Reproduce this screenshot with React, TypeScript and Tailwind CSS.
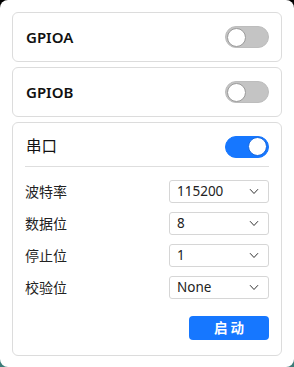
import { useState } from 'react';

const font = { fontFamily: '"Noto Sans", "Noto Sans CJK SC", sans-serif' };

function Toggle({ on, onChange }: { on: boolean; onChange: () => void }) {
    return (
        <button
            onClick={onChange}
            className={`relative w-[44px] h-[22px] rounded-full border flex items-center ${on ? 'bg-[#1677ff] border-[#1677ff] justify-end' : 'bg-[#c4c4c4] border-[#bdbdbd] justify-start'}`}
        >
            <span className={`w-[19px] h-[19px] rounded-full bg-white ${on ? 'mr-[1px] border border-[#1668e0]' : 'ml-[1px] border border-[#9a9a9a]'}`}></span>
        </button>
    );
}

function Select({ value }: { value: string }) {
    return (
        <div className="w-[100px] h-[23px] border border-[#d6d6d6] rounded-[3px] bg-white flex items-center justify-between pl-[7px] pr-[9px]">
            <span className="text-[13.5px] text-[#222]">{value}</span>
            <svg width="10" height="7" viewBox="0 0 10 7" fill="none" stroke="#333" strokeWidth="1">
                <path d="M1 1.2 L5 5.5 L9 1.2" />
            </svg>
        </div>
    );
}

export default function App() {
    const [a, setA] = useState(false);
    const [b, setB] = useState(false);
    const [serial, setSerial] = useState(true);

    const rows = [
        { label: '波特率', value: '115200' },
        { label: '数据位', value: '8' },
        { label: '停止位', value: '1' },
        { label: '校验位', value: 'None' },
    ];

    return (
        <div className="w-[294px] h-[367px] bg-gradient-to-b from-black to-[#3d7d7a]" style={font}>
            <div className="w-full h-full bg-white rounded-[8px] px-[12px] pt-[12px] flex flex-col gap-[5px]">
                <div className="h-[50px] border border-[#dcdcdc] rounded-[6px] flex items-center justify-between pl-[13px] pr-[12px]">
                    <span className="text-[15px] font-semibold text-[#111]">GPIOA</span>
                    <Toggle on={a} onChange={() => setA(!a)} />
                </div>
                <div className="h-[50px] border border-[#dcdcdc] rounded-[6px] flex items-center justify-between pl-[13px] pr-[12px]">
                    <span className="text-[15px] font-semibold text-[#111]">GPIOB</span>
                    <Toggle on={b} onChange={() => setB(!b)} />
                </div>
                <div className="h-[234px] border border-[#dcdcdc] rounded-[6px] px-[12px] pt-[12px]">
                    <div className="flex items-center justify-between h-[23px]">
                        <span className="text-[15.5px] text-[#111] pl-[1px]">串口</span>
                        <Toggle on={serial} onChange={() => setSerial(!serial)} />
                    </div>
                    <div className="h-px bg-[#dedede] mt-[8px] mb-[13px]"></div>
                    <div className="flex flex-col gap-[9px]">
                        {rows.map(r => (
                            <div key={r.label} className="flex items-center justify-between">
                                <span className="text-[14px] text-[#222]">{r.label}</span>
                                <Select value={r.value} />
                            </div>
                        ))}
                    </div>
                    <div className="flex justify-end mt-[17px]">
                        <button className="w-[80px] h-[24px] rounded-[4px] bg-[#1677ff] text-white text-[13.5px] font-bold tracking-[3px] pl-[3px]">
                            启动
                        </button>
                    </div>
                </div>
            </div>
        </div>
    );
}
